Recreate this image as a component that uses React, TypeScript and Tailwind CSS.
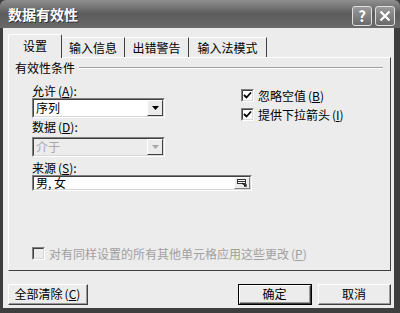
import React from "react";

const Mn = ({ c }: { c: string }) => (
  <span className="ml-[2px]">
    (<span className="underline underline-offset-1">{c}</span>)
  </span>
);

const Check = ({ checked, disabled }: { checked?: boolean; disabled?: boolean }) => (
  <div
    className={`w-[13px] h-[13px] border border-t-[#808080] border-l-[#808080] border-r-white border-b-white flex items-center justify-center ${
      disabled ? "bg-[#ececec]" : "bg-white"
    }`}
  >
    <div className="w-[11px] h-[11px] border border-t-[#404040] border-l-[#404040] border-r-[#d8d8d8] border-b-[#d8d8d8] flex items-center justify-center">
      {checked && (
        <svg width="9" height="9" viewBox="0 0 9 9">
          <path d="M1 4 L3.5 6.5 L8 1.5" stroke="#000" strokeWidth="1.8" fill="none" />
        </svg>
      )}
    </div>
  </div>
);

const Combo = ({ value, disabled }: { value: string; disabled?: boolean }) => (
  <div className="w-[133px] h-[20px] border border-t-[#808080] border-l-[#808080] border-r-white border-b-white">
    <div
      className={`h-full flex items-center border border-t-[#404040] border-l-[#404040] border-r-[#d8d8d8] border-b-[#d8d8d8] ${
        disabled ? "bg-[#ececec] text-[#a8a8a8]" : "bg-white"
      }`}
    >
      <span className="flex-1 pl-[2px] leading-[16px]">{value}</span>
      <div className="w-[16px] h-full bg-[#ececec] border border-t-white border-l-white border-r-[#404040] border-b-[#404040] flex items-center justify-center">
        <svg width="7" height="4" viewBox="0 0 7 4">
          <path d="M0 0 H7 L3.5 4 Z" fill={disabled ? "#a8a8a8" : "#000"} />
        </svg>
      </div>
    </div>
  </div>
);

const Btn = ({ children, w, def }: { children: React.ReactNode; w: string; def?: boolean }) => (
  <div className={`${w} h-[21px] ${def ? "border border-black" : ""}`}>
    <div className="h-full bg-[#ececec] border border-t-white border-l-white border-r-[#404040] border-b-[#404040] flex items-center justify-center">
      <div className="h-full w-full flex items-center justify-center border-r border-b border-r-[#9a9a9a] border-b-[#9a9a9a]">
        {children}
      </div>
    </div>
  </div>
);

const Tab = ({ label, w, active }: { label: string; w: string; active?: boolean }) =>
  active ? (
    <div className={`${w} h-[24px] bg-[#ececec] border-t border-l border-r border-t-white border-l-white border-r-[#404040] rounded-t-[2px] flex items-center justify-center pb-[2px]`}>
      {label}
    </div>
  ) : (
    <div className={`${w} h-[20px] mb-[1px] bg-[#ececec] border-t border-r border-t-white border-r-[#404040] flex items-center justify-center`}>
      {label}
    </div>
  );

export default function App() {
  return (
    <div className="w-[400px] h-[313px] bg-[#3e3e3e] flex flex-col font-['Noto_Sans_CJK_SC','Noto_Sans',sans-serif] text-[12px] leading-[12px] text-black">
      <div className="h-[28px] flex items-center pl-[8px] pr-[5px] rounded-t-[6px] bg-linear-to-b from-[#909090] via-[#5c5c5c] to-[#6a6a6a]">
        <span className="flex-1 text-white font-bold text-[14px] leading-[14px] [text-shadow:1px_1px_0_#333]">
          数据有效性
        </span>
        <div className="flex gap-[3px] mt-[3px]">
          <div className="w-[20px] h-[20px] rounded-[3px] border border-[#e0e0e0] bg-linear-to-b from-[#9a9a9a] to-[#6a6a6a] flex items-center justify-center text-white font-bold text-[15px]">
            ?
          </div>
          <div className="w-[20px] h-[20px] rounded-[3px] border border-[#e0e0e0] bg-linear-to-b from-[#9a9a9a] to-[#6a6a6a] flex items-center justify-center">
            <svg width="12" height="12" viewBox="0 0 12 12">
              <path d="M1.5 1.5 L10.5 10.5 M10.5 1.5 L1.5 10.5" stroke="#fff" strokeWidth="2.2" />
            </svg>
          </div>
        </div>
      </div>
      <div className="flex-1 ml-[3px] mr-[6px] mb-[5px] bg-[#ececec] pt-[6px] pl-[5px] pr-[3px] flex flex-col">
        <div className="flex items-end -mb-[1px] relative z-10">
          <Tab label="设置" w="w-[54px]" active />
          <Tab label="输入信息" w="w-[63px]" />
          <Tab label="出错警告" w="w-[64px]" />
          <Tab label="输入法模式" w="w-[78px]" />
        </div>
        <div className="h-[214px] border border-t-white border-l-white border-r-[#404040] border-b-[#404040] flex flex-col">
          <div className="flex items-center pt-[4px] pl-[6px] pr-[7px] h-[16px]">
            <span>有效性条件</span>
            <div className="flex-1 ml-[4px] h-[2px] border-t border-b border-t-[#a0a0a0] border-b-white" />
          </div>
          <div className="pl-[23px] flex">
            <div className="flex flex-col">
              <div className="mt-[11px] h-[12px]">
                允许<Mn c="A" />:
              </div>
              <div className="mt-[1px]">
                <Combo value="序列" />
              </div>
              <div className="mt-[3px] h-[12px]">
                数据<Mn c="D" />:
              </div>
              <div className="mt-[4px]">
                <Combo value="介于" disabled />
              </div>
            </div>
            <div className="ml-[76px] mt-[15px] flex flex-col gap-[6px]">
              <div className="flex items-center gap-[4px]">
                <Check checked />
                <span>
                  忽略空值<Mn c="B" />
                </span>
              </div>
              <div className="flex items-center gap-[4px]">
                <Check checked />
                <span>
                  提供下拉箭头<Mn c="I" />
                </span>
              </div>
            </div>
          </div>
          <div className="pl-[23px]">
            <div className="mt-[5px] mb-[1px] h-[12px]">
              来源<Mn c="S" />:
            </div>
            <div className="w-[220px] h-[16px] border border-t-[#808080] border-l-[#808080] border-r-white border-b-white">
              <div className="h-full bg-white flex items-center border border-t-[#404040] border-l-[#404040] border-r-[#d8d8d8] border-b-[#d8d8d8]">
                <span className="flex-1 pl-[2px]">男, 女</span>
                <div className="w-[16px] h-full bg-[#ececec] border border-t-white border-l-white border-r-[#808080] border-b-[#808080] flex items-center justify-center">
                  <svg width="11" height="9" viewBox="0 0 11 9">
                    <rect x="0.5" y="0.5" width="8" height="4" fill="#fff" stroke="#333" />
                    <path d="M1 2.5 H8" stroke="#333" />
                    <path d="M5 4 L9 7 L9 5 M9 7 L7 7" stroke="#222" strokeWidth="1.3" fill="none" />
                  </svg>
                </div>
              </div>
            </div>
          </div>
          <div className="pl-[23px] mt-[56px] flex items-center gap-[4px] text-[#a0a0a0]">
            <Check disabled />
            <span>
              对有同样设置的所有其他单元格应用这些更改<Mn c="P" />
            </span>
          </div>
        </div>
        <div className="flex mt-[13px]">
          <Btn w="w-[80px]">
            全部清除<Mn c="C" />
          </Btn>
          <div className="flex-1" />
          <Btn w="w-[74px]" def>
            确定
          </Btn>
          <div className="w-[6px]" />
          <Btn w="w-[73px]">取消</Btn>
        </div>
      </div>
    </div>
  );
}
